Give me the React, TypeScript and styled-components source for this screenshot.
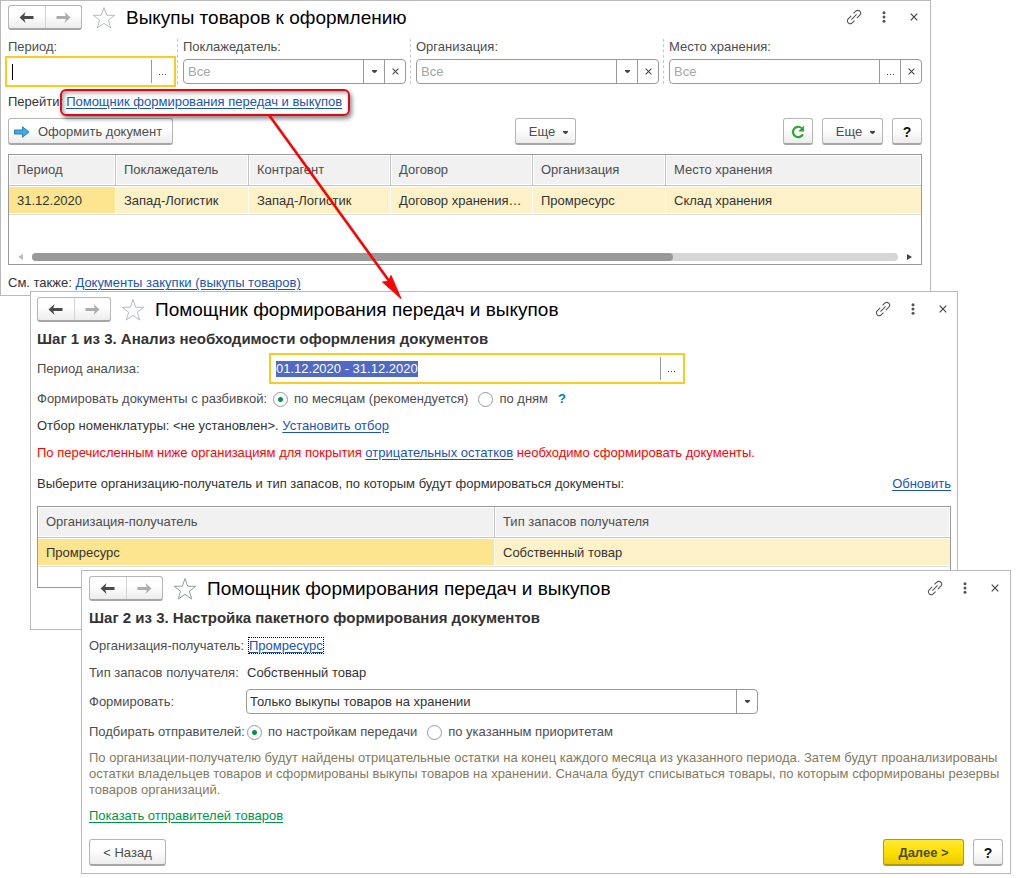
import React, { useEffect, useRef } from "react";
import styled, { createGlobalStyle, css } from "styled-components";

const GlobalStyle = createGlobalStyle`
  *, *::before, *::after { box-sizing: border-box; }
  body { margin: 0; background: #fff; }
  body, button, input, select {
    font-family: "Liberation Sans", Arial, sans-serif;
    font-size: 13px;
    line-height: 16px;
    color: #333;
  }
`;

const Desktop = styled.main`
  position: relative;
  min-width: 960px;
  min-height: 878px;
  overflow: hidden;
`;

const WindowFrame = styled.section<{ $top: number; $left: number; $right: number; $pad: string }>`
  position: absolute;
  top: ${(p) => p.$top}px;
  left: ${(p) => p.$left}px;
  right: ${(p) => p.$right}px;
  display: flex;
  flex-direction: column;
  padding: ${(p) => p.$pad};
  background: #fff;
  border: 1px solid #b9b9b9;
`;

const TitleBar = styled.header`
  display: flex;
  align-items: center;
  height: 25px;
`;

const NavGroup = styled.div`
  display: flex;
  width: 74px;
  height: 25px;
  border: 1px solid #b5b5b5;
  border-bottom: 2px solid #a6a6a6;
  border-radius: 3px;
  background: linear-gradient(#fff 40%, #ececec);
`;

const NavButton = styled.button`
  flex: 1;
  display: flex;
  align-items: center;
  justify-content: center;
  padding: 0;
  border: 0;
  background: none;
  & + & { border-left: 1px solid #d4d4d4; }
`;

const IconButton = styled.button`
  display: flex;
  align-items: center;
  justify-content: center;
  width: 16px;
  height: 24px;
  padding: 0;
  border: 0;
  background: none;
`;

const StarButton = styled(IconButton)`
  width: 24px;
  margin: 0 10px;
`;

const WindowTools = styled.div`
  display: flex;
  gap: 14px;
  height: 25px;
`;

const Title = styled.h1`
  flex: 1;
  margin: 0;
  font-size: 19px;
  line-height: 24px;
  font-weight: 400;
  color: #000;
`;

const Heading = styled.h2`
  margin: 9px 0 0;
  font-size: 15px;
  line-height: 16px;
  font-weight: 700;
  color: #333;
`;

const Line = styled.div<{ $gap: number; $tone?: string }>`
  display: flex;
  align-items: center;
  margin-top: ${(p) => p.$gap}px;
  color: ${(p) => p.$tone ?? "#333"};
`;

const FormRow = styled.div<{ $gap: number; $label: number }>`
  display: grid;
  grid-template-columns: ${(p) => p.$label}px minmax(0, 1fr);
  align-items: center;
  margin-top: ${(p) => p.$gap}px;
  white-space: nowrap;
`;

const Label = styled.label`
  color: #4d4d4d;
`;

const Link = styled.a<{ $tone?: string }>`
  color: ${(p) => p.$tone ?? "#1a54b4"};
  text-decoration: underline;
  text-underline-offset: 2px;
`;

const FocusedLink = styled(Link)`
  outline: 1px dotted #000;
`;

const Spacer = styled.div<{ $grow?: number }>`
  flex: ${(p) => p.$grow ?? 1};
`;

const Filters = styled.div`
  display: grid;
  grid-template-columns: 165fr 229fr 249fr 259fr;
  gap: 4px;
  margin-top: 9px;
`;

const FilterCell = styled.div`
  display: flex;
  flex-direction: column;
  gap: 4px;
  min-width: 0;
  & + & {
    padding-left: 5px;
    border-left: 1px dashed #c8c8c8;
  }
`;

const Field = styled.div<{ $focused?: boolean; $width?: string }>`
  display: flex;
  align-items: ${(p) => (p.$focused ? "center" : "stretch")};
  width: ${(p) => p.$width ?? "auto"};
  max-width: 100%;
  height: 25px;
  background: #fff;
  ${(p) =>
    p.$focused
      ? css`box-shadow: 0 0 0 1px #fff, 0 0 0 3px #fccb22;`
      : css`border: 1px solid #999; border-radius: 4px;`}
`;

const TextInput = styled.input<{ $caret?: boolean }>`
  flex: 1;
  min-width: 0;
  padding: 0 4px;
  border: 0;
  outline: 0;
  background: ${(p) =>
    p.$caret ? "linear-gradient(#000, #000) no-repeat 4px center / 1px 16px" : "none"};
  &::placeholder { color: #a6a6a6; opacity: 1; }
  &::selection { background: #5069c4; color: #fff; }
`;

const FieldButton = styled.button`
  display: flex;
  align-items: center;
  justify-content: center;
  width: 21px;
  padding: 0;
  border: 0;
  border-left: 1px solid #999;
  background: none;
`;

const PickerButton = styled(FieldButton)`
  width: 22px;
  height: 23px;
`;

const SelectBox = styled.div`
  position: relative;
  width: 512px;
  max-width: 100%;
  height: 25px;
`;

const Select = styled.select`
  width: 100%;
  height: 25px;
  padding: 0 24px 0 3px;
  border: 1px solid #999;
  border-radius: 4px;
  appearance: none;
  background: #fff;
`;

const SelectArrow = styled.span`
  position: absolute;
  top: 1px;
  bottom: 1px;
  right: 1px;
  display: flex;
  align-items: center;
  justify-content: center;
  width: 21px;
  border-left: 1px solid #999;
  pointer-events: none;
`;

const Button = styled.button<{ $width: number; $primary?: boolean }>`
  display: flex;
  align-items: center;
  justify-content: center;
  gap: 8px;
  min-width: ${(p) => p.$width}px;
  height: 27px;
  padding: 2px 5px 0;
  white-space: nowrap;
  color: #4d4d4d;
  border: 1px solid #b5b5b5;
  border-bottom: 2px solid #a6a6a6;
  border-radius: 3px;
  background: linear-gradient(#fff 40%, #ececec);
  ${(p) =>
    p.$primary &&
    css`
      font-weight: 700;
      color: #4d4d33;
      border-color: #b09a14;
      background: linear-gradient(#ffe838, #ffe000 50%, #ebcb00);
    `}
`;

const CommandButton = styled(Button)`
  justify-content: flex-start;
`;

const MenuButton = styled(Button)`
  padding-left: 11px;
`;

const HelpButton = styled(Button)`
  font-size: 14px;
  font-weight: 700;
  color: #111;
`;

const Actions = styled.div<{ $gap: number }>`
  display: flex;
  margin-top: ${(p) => p.$gap}px;
`;

const ButtonGroup = styled.div`
  display: flex;
  gap: 9px;
`;

const Callout = styled.span`
  position: relative;
  margin-left: 3px;
  &::after {
    content: "";
    position: absolute;
    inset: -5px -8px -6px -6px;
    border: 2px solid #e30613;
    border-radius: 6px;
    box-shadow: 2px 3px 4px rgba(0, 0, 0, 0.45), inset 2px 2px 4px rgba(0, 0, 0, 0.35);
    pointer-events: none;
  }
`;

const TableBox = styled.div<{ $gap: number; $tail?: number }>`
  margin-top: ${(p) => p.$gap}px;
  padding-bottom: ${(p) => p.$tail ?? 0}px;
  border: 1px solid #999;
`;

const Table = styled.table`
  width: 100%;
  table-layout: fixed;
  border-collapse: separate;
  border-spacing: 0;
`;

const HeadCell = styled.th<{ $width?: string }>`
  width: ${(p) => p.$width ?? "auto"};
  height: 31px;
  padding: 0 8px;
  text-align: left;
  font-weight: 400;
  color: #4d4d4d;
  background: #f1f1f1;
  border-bottom: 1px solid #c4c4c4;
  box-shadow: inset 0 0 0 1px #fff;
  & + & { border-left: 1px solid #c4c4c4; }
`;

const Cell = styled.td<{ $current?: boolean }>`
  height: 29px;
  padding: 2px 8px 0;
  white-space: nowrap;
  background: ${(p) => (p.$current ? "#fde58f" : "#fdf2c7")};
  border-bottom: 1px solid #dedede;
  box-shadow: inset 0 1px #fff, inset 0 -1px #fff;
  & + & { border-left: 1px solid #fff; }
`;

const ScrollBar = styled.div`
  display: flex;
  align-items: center;
  gap: 9px;
  height: 8px;
  margin: 38px 9px 3px;
`;

const Track = styled.div`
  flex: 1;
  height: 8px;
  border-radius: 4px;
  background: #d6d6d6;
`;

const Thumb = styled.div`
  width: 74%;
  height: 8px;
  border-radius: 4px;
  background: #999;
`;

const RadioGroup = styled.div`
  display: flex;
  align-items: center;
  height: 16px;
`;

const RadioLabel = styled.label`
  display: flex;
  align-items: center;
  gap: 6px;
  margin-right: 10px;
  color: #4d4d4d;
`;

const Radio = styled.input`
  appearance: none;
  width: 15px;
  height: 15px;
  margin: 0;
  border: 1px solid #999;
  border-radius: 50%;
  background: #fff;
  &:checked { background: radial-gradient(circle, #009646 0 2px, #fff 3px); }
`;

const Hint = styled.button`
  padding: 0;
  border: 0;
  background: none;
  font-weight: 700;
  color: #0f74b8;
`;

const Note = styled.p`
  margin: 10px 0 0;
  color: #857a5c;
`;

const ArrowLayer = styled.svg`
  position: absolute;
  top: 110px;
  left: 260px;
  pointer-events: none;
`;

const ArrowIcon = ({ color, flip }: { color: string; flip?: boolean }) => (
  <svg width="15" height="11" viewBox="0 0 15 11" aria-hidden="true">
    <path
      d="M0.5 5.5 6.5 0 5.3 4H14.5V7H5.3L6.5 11Z"
      fill={color}
      transform={flip ? "translate(15 0) scale(-1 1)" : undefined}
    />
  </svg>
);

const StarIcon = ({ color }: { color: string }) => (
  <svg width="24" height="24" viewBox="0 0 24 24" aria-hidden="true">
    <path
      d="M12 1.5 14.7 9.2 22.8 9.3 16.4 14.2 18.7 22 12 17.4 5.3 22 7.6 14.2 1.2 9.3 9.3 9.2Z"
      fill="#fff"
      stroke={color}
    />
  </svg>
);

const ChainIcon = () => (
  <svg width="18" height="18" viewBox="0 0 18 18" aria-hidden="true">
    <g transform="rotate(-45 9 9)" fill="none" stroke="#555" strokeWidth="1.2">
      <path d="M7.6 5.8H3A3.2 3.2 0 0 0 3 12.2H6.6M10.4 12.2H15A3.2 3.2 0 0 0 15 5.8H11.4M5 9H13" />
    </g>
  </svg>
);

const DotsIcon = () => (
  <svg width="4" height="12" viewBox="0 0 4 12" fill="#555" aria-hidden="true">
    <circle cx="2" cy="1.7" r="1.5" />
    <circle cx="2" cy="6" r="1.5" />
    <circle cx="2" cy="10.3" r="1.5" />
  </svg>
);

const CrossIcon = ({ size }: { size: number }) => (
  <svg width={size} height={size} viewBox="0 0 8 8" aria-hidden="true">
    <path d="M0.7 0.7 7.3 7.3M7.3 0.7 0.7 7.3" stroke="#444" strokeWidth="1.2" />
  </svg>
);

const CaretIcon = () => (
  <svg width="5" height="3" viewBox="0 0 5 3" aria-hidden="true">
    <path d="M0 0H5V1L3 3H2L0 1Z" fill="#444" />
  </svg>
);

const DotsRow = () => (
  <svg width="7" height="9" viewBox="0 0 7 9" fill="#444" aria-hidden="true">
    <path d="M0 7H1V8H0ZM3 7H4V8H3ZM6 7H7V8H6Z" />
  </svg>
);

const ScrollArrow = ({ color, flip }: { color: string; flip?: boolean }) => (
  <svg width="5" height="6" viewBox="0 0 5 6" aria-hidden="true">
    <path d={flip ? "M5 0V6L0 3Z" : "M0 0V6L5 3Z"} fill={color} />
  </svg>
);

const RunIcon = () => (
  <svg width="16" height="12" viewBox="0 0 16 12" aria-hidden="true">
    <path d="M0.5 4H8.5V0.8L15 6 8.5 11.2V8H0.5Z" fill="#3fa9e8" stroke="#2b7fb8" />
  </svg>
);

const RefreshIcon = () => (
  <svg width="14" height="14" viewBox="0 0 14 14" aria-hidden="true">
    <path d="M11.9 9.2A5.2 5.2 0 1 1 10.6 3" fill="none" stroke="#2fa336" strokeWidth="2.2" />
    <path d="M13 0.5V6.4H7.2Z" fill="#2fa336" />
  </svg>
);

function WindowTitle({ title, star = "#b4bac2" }: { title: string; star?: string }) {
  return (
    <TitleBar>
      <NavGroup>
        <NavButton aria-label="Назад"><ArrowIcon color="#4a4a4a" /></NavButton>
        <NavButton aria-label="Вперед"><ArrowIcon color="#adadad" flip /></NavButton>
      </NavGroup>
      <StarButton aria-label="В избранное"><StarIcon color={star} /></StarButton>
      <Title>{title}</Title>
      <WindowTools>
        <IconButton aria-label="Ссылка"><ChainIcon /></IconButton>
        <IconButton aria-label="Меню"><DotsIcon /></IconButton>
        <IconButton aria-label="Закрыть"><CrossIcon size={8} /></IconButton>
      </WindowTools>
    </TitleBar>
  );
}

function Filter({ id, label, picker }: { id: string; label: string; picker: "list" | "dialog" }) {
  return (
    <FilterCell>
      <Label htmlFor={id}>{label}</Label>
      <Field>
        <TextInput id={id} placeholder="Все" />
        <FieldButton aria-label="Выбрать">{picker === "list" ? <CaretIcon /> : <DotsRow />}</FieldButton>
        <FieldButton aria-label="Очистить"><CrossIcon size={7} /></FieldButton>
      </Field>
    </FilterCell>
  );
}

const columns = [
  { title: "Период", width: "106px", value: "31.12.2020" },
  { title: "Поклажедатель", width: "133px", value: "Запад-Логистик" },
  { title: "Контрагент", width: "142px", value: "Запад-Логистик" },
  { title: "Договор", width: "142px", value: "Договор хранения…" },
  { title: "Организация", width: "133px", value: "Промресурс" },
  { title: "Место хранения", width: undefined, value: "Склад хранения" },
];

function BuyoutsWindow() {
  return (
    <WindowFrame $top={0} $left={0} $right={85} $pad="4px 8px 4px 7px">
      <WindowTitle title="Выкупы товаров к оформлению" />
      <Filters>
        <FilterCell>
          <Label htmlFor="period">Период:</Label>
          <Field $focused>
            <TextInput id="period" $caret />
            <PickerButton aria-label="Выбрать период"><DotsRow /></PickerButton>
          </Field>
        </FilterCell>
        <Filter id="bailor" label="Поклажедатель:" picker="list" />
        <Filter id="company" label="Организация:" picker="list" />
        <Filter id="storage" label="Место хранения:" picker="dialog" />
      </Filters>
      <Line $gap={10}>
        Перейти:
        <Callout><Link href="#helper">Помощник формирования передач и выкупов</Link></Callout>
      </Line>
      <Actions $gap={8}>
        <CommandButton $width={165}><RunIcon /> Оформить документ</CommandButton>
        <Spacer $grow={342} />
        <MenuButton $width={61}>Еще <CaretIcon /></MenuButton>
        <Spacer $grow={207} />
        <ButtonGroup>
          <Button $width={30} aria-label="Обновить"><RefreshIcon /></Button>
          <MenuButton $width={61}>Еще <CaretIcon /></MenuButton>
          <HelpButton $width={30}>?</HelpButton>
        </ButtonGroup>
      </Actions>
      <TableBox $gap={9}>
        <Table>
          <thead>
            <tr>{columns.map((c) => <HeadCell key={c.title} $width={c.width}>{c.title}</HeadCell>)}</tr>
          </thead>
          <tbody>
            <tr>{columns.map((c, i) => <Cell key={c.title} $current={i === 0}>{c.value}</Cell>)}</tr>
          </tbody>
        </Table>
        <ScrollBar>
          <ScrollArrow color="#bbb" flip />
          <Track><Thumb /></Track>
          <ScrollArrow color="#444" />
        </ScrollBar>
      </TableBox>
      <Line $gap={10}>
        См. также:&nbsp;<Link href="#purchases">Документы закупки (выкупы товаров)</Link>
      </Line>
    </WindowFrame>
  );
}

function AnalysisWindow() {
  const range = useRef<HTMLInputElement>(null);
  useEffect(() => {
    range.current?.focus();
    range.current?.select();
  }, []);

  return (
    <WindowFrame $top={291} $left={30} $right={58} $pad="5px 6px 41px">
      <WindowTitle title="Помощник формирования передач и выкупов" />
      <Heading>Шаг 1 из 3. Анализ необходимости оформления документов</Heading>
      <FormRow $gap={9} $label={235}>
        <Label htmlFor="range">Период анализа:</Label>
        <Field $focused $width="410px">
          <TextInput id="range" ref={range} defaultValue="01.12.2020 - 31.12.2020" />
          <PickerButton aria-label="Выбрать период"><DotsRow /></PickerButton>
        </Field>
      </FormRow>
      <FormRow $gap={10} $label={236}>
        <Label as="span">Формировать документы с разбивкой:</Label>
        <RadioGroup>
          <RadioLabel><Radio type="radio" name="split" defaultChecked />по месяцам (рекомендуется)</RadioLabel>
          <RadioLabel><Radio type="radio" name="split" />по дням</RadioLabel>
          <Hint aria-label="Справка">?</Hint>
        </RadioGroup>
      </FormRow>
      <Line $gap={11}>
        Отбор номенклатуры: &lt;не установлен&gt;.&nbsp;<Link href="#filter">Установить отбор</Link>
      </Line>
      <Line $gap={11} $tone="#f00">
        По перечисленным ниже организациям для покрытия&nbsp;
        <Link href="#negative">отрицательных остатков</Link>
        &nbsp;необходимо сформировать документы.
      </Line>
      <Line $gap={15}>
        Выберите организацию-получатель и тип запасов, по которым будут формироваться документы:
        <Spacer />
        <Link href="#refresh">Обновить</Link>
      </Line>
      <TableBox $gap={14} $tail={20}>
        <Table>
          <thead>
            <tr>
              <HeadCell $width="50%">Организация-получатель</HeadCell>
              <HeadCell>Тип запасов получателя</HeadCell>
            </tr>
          </thead>
          <tbody>
            <tr>
              <Cell $current>Промресурс</Cell>
              <Cell>Собственный товар</Cell>
            </tr>
          </tbody>
        </Table>
      </TableBox>
    </WindowFrame>
  );
}

function SetupWindow() {
  return (
    <WindowFrame $top={570} $left={81} $right={5} $pad="5px 7px 7px">
      <WindowTitle title="Помощник формирования передач и выкупов" star="#8f9cab" />
      <Heading>Шаг 2 из 3. Настройка пакетного формирования документов</Heading>
      <FormRow $gap={12} $label={160}>
        <Label as="span">Организация-получатель:</Label>
        <span><FocusedLink href="#org">Промресурс</FocusedLink></span>
      </FormRow>
      <FormRow $gap={11} $label={158}>
        <Label as="span">Тип запасов получателя:</Label>
        <span>Собственный товар</span>
      </FormRow>
      <FormRow $gap={8} $label={157}>
        <Label htmlFor="mode">Формировать:</Label>
        <SelectBox>
          <Select id="mode" defaultValue="buyouts">
            <option value="buyouts">Только выкупы товаров на хранении</option>
          </Select>
          <SelectArrow><CaretIcon /></SelectArrow>
        </SelectBox>
      </FormRow>
      <FormRow $gap={10} $label={158}>
        <Label as="span">Подбирать отправителей:</Label>
        <RadioGroup>
          <RadioLabel><Radio type="radio" name="senders" defaultChecked />по настройкам передачи</RadioLabel>
          <RadioLabel><Radio type="radio" name="senders" />по указанным приоритетам</RadioLabel>
        </RadioGroup>
      </FormRow>
      <Note>
        По организации-получателю будут найдены отрицательные остатки на конец каждого месяца из
        указанного периода. Затем будут проанализированы остатки владельцев товаров и сформированы
        выкупы товаров на хранении. Сначала будут списываться товары, по которым сформированы
        резервы товаров организаций.
      </Note>
      <Line $gap={10}>
        <Link href="#senders" $tone="#009646">Показать отправителей товаров</Link>
      </Line>
      <Actions $gap={15}>
        <Button $width={77}>&lt; Назад</Button>
        <Spacer />
        <ButtonGroup>
          <Button $width={81} $primary>Далее &gt;</Button>
          <HelpButton $width={30}>?</HelpButton>
        </ButtonGroup>
      </Actions>
    </WindowFrame>
  );
}

export default function App() {
  return (
    <>
      <GlobalStyle />
      <Desktop>
        <BuyoutsWindow />
        <AnalysisWindow />
        <SetupWindow />
        <ArrowLayer width="150" height="195" viewBox="260 110 150 195" aria-hidden="true">
          <path d="M269 115 392 285" stroke="#f00" strokeWidth="2.6" />
          <path d="M401 298.5 382.5 282 388.5 281.5 391 275.5Z" fill="#f00" stroke="#f00" />
        </ArrowLayer>
      </Desktop>
    </>
  );
}
